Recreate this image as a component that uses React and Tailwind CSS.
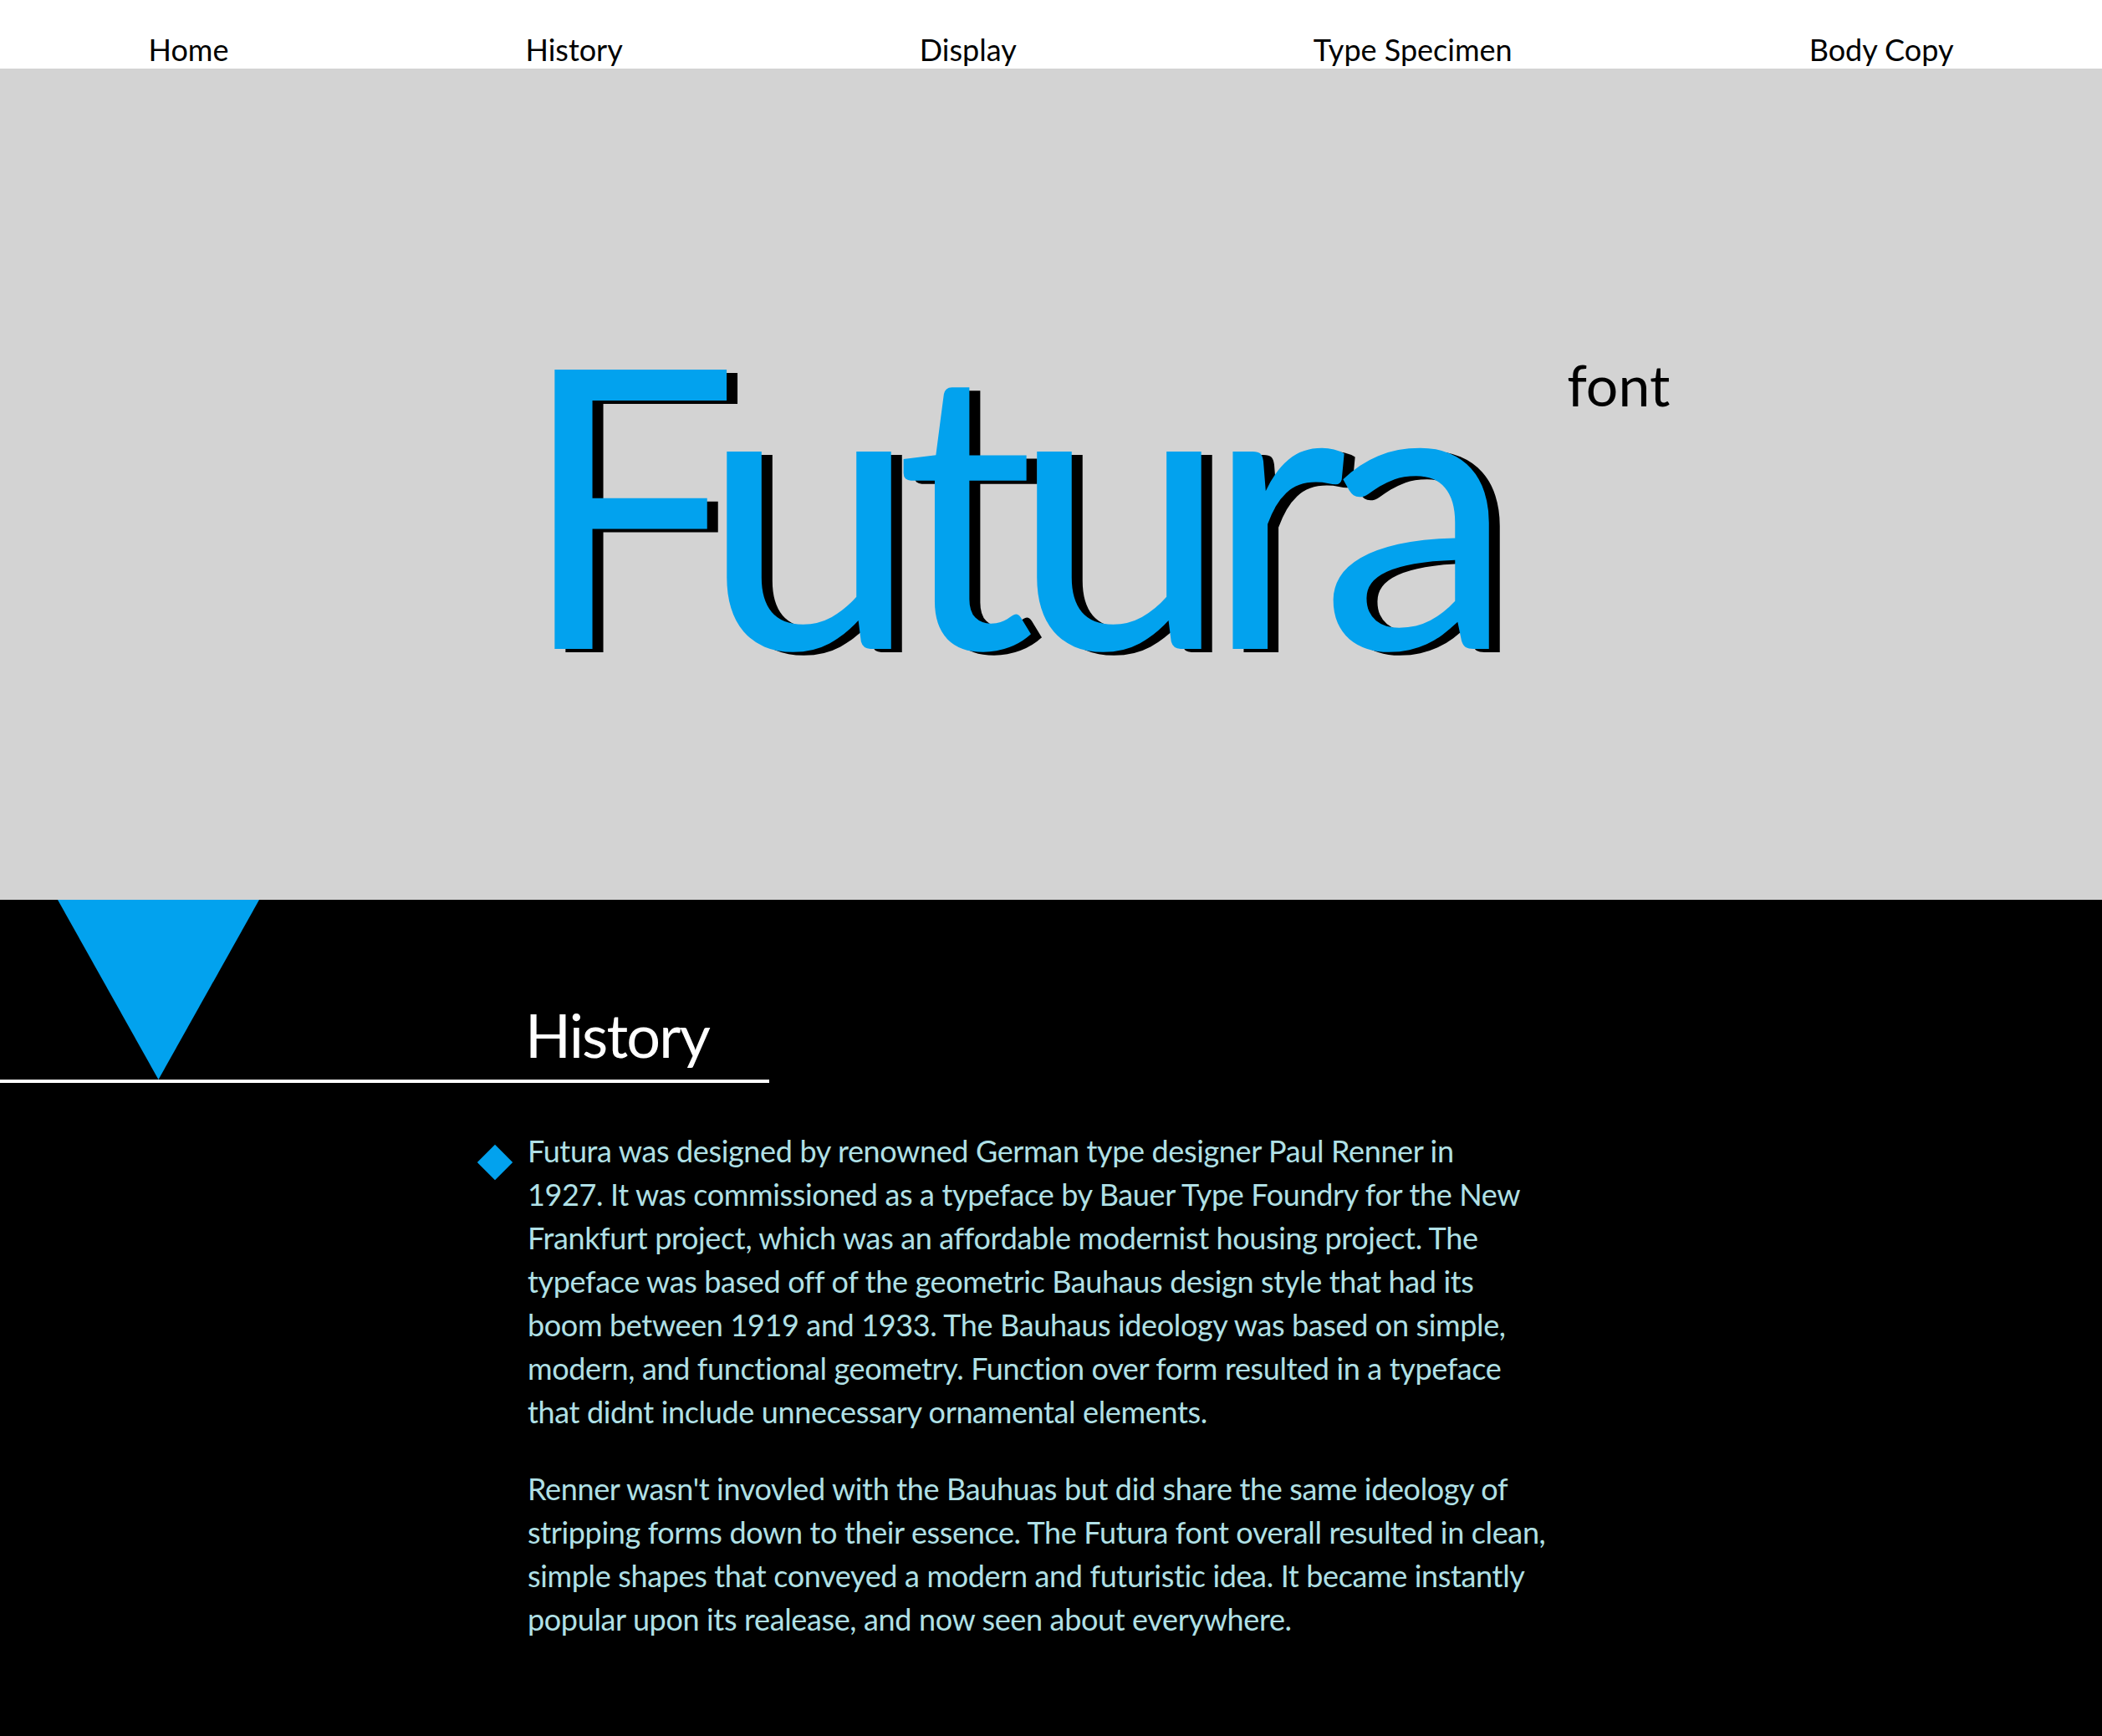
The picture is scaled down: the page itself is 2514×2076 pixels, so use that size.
const NAV = ['Home', 'History', 'Display', 'Type Specimen', 'Body Copy']

const PARAS = [
  [
    'Futura was designed by renowned German type designer Paul Renner in',
    '1927. It was commissioned as a typeface by Bauer Type Foundry for the New',
    'Frankfurt project, which was an affordable modernist housing project. The',
    'typeface was based off of the geometric Bauhaus design style that had its',
    'boom between 1919 and 1933. The Bauhaus ideology was based on simple,',
    'modern, and functional geometry. Function over form resulted in a typeface',
    'that didnt include unnecessary ornamental elements.',
  ],
  [
    "Renner wasn't invovled with the Bauhuas but did share the same ideology of",
    'stripping forms down to their essence. The Futura font overall resulted in clean,',
    'simple shapes that conveyed a modern and futuristic idea. It became instantly',
    'popular upon its realease, and now seen about everywhere.',
  ],
]

export default function App() {
  return (
    <div className="min-h-screen flex flex-col bg-black font-[family-name:Futura,Lato,sans-serif]">
      {/* nav */}
      <nav className="h-[82px] bg-white flex justify-around items-start pt-[38px]">
        {NAV.map(n => (
          <a key={n} href="#" className="text-[36px] leading-[1.2] text-black">{n}</a>
        ))}
      </nav>

      {/* hero */}
      <header className="h-[994px] bg-[#d3d3d3] flex justify-center items-start pt-[281px] pl-[104px]">
        <h1 className="text-[466px] leading-none tracking-[-0.06em] text-[#02a2ee] [text-shadow:13px_4px_0_#000]">Futura</h1>
        <span className="text-[68px] leading-none text-black ml-[91px] mt-[63px]">font</span>
      </header>

      {/* history */}
      <section className="flex-1 pb-[100px]">
        <div className="w-[920px] border-b-4 border-white flex items-end">
          <div className="ml-[69px] w-[241px] h-[215px] bg-[#02a2ee] [clip-path:polygon(0_0,100%_0,50%_100%)]" />
          <h2 className="ml-[318px] mb-[18px] text-[72px] leading-none tracking-[-0.025em] text-white">History</h2>
        </div>

        <div className="pl-[571px] pt-[55px] flex gap-[18px]">
          <div className="w-[42px] h-[42px] mt-[19px] flex items-center justify-center shrink-0">
            <div className="w-[30px] h-[30px] bg-[#02a2ee] rotate-45" />
          </div>
          <div className="text-[36px] leading-[52px] tracking-[-0.01em] text-[#b0e0e6] whitespace-nowrap">
            {PARAS.map((lines, i) => (
              <p key={i} className={i > 0 ? 'mt-[40px]' : ''}>
                {lines.map((l, j) => (
                  <span key={j} className="block">{l}</span>
                ))}
              </p>
            ))}
          </div>
        </div>
      </section>
    </div>
  )
}
